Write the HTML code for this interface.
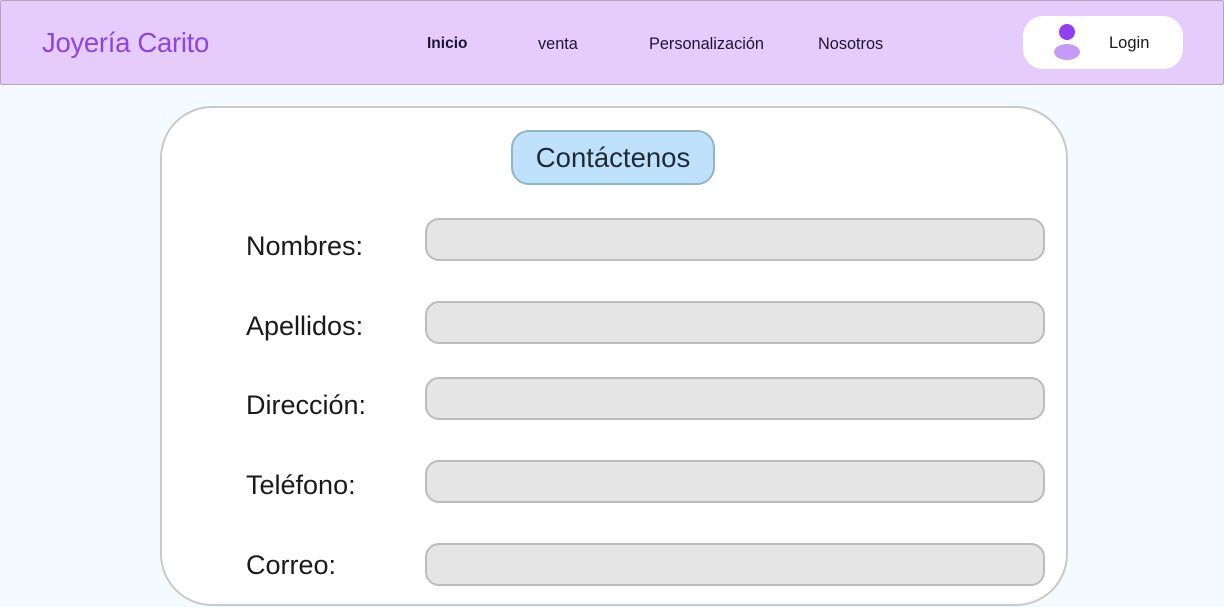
<!DOCTYPE html>
<html><head><meta charset="utf-8"><style>
*{margin:0;padding:0;box-sizing:border-box}
body{width:1224px;height:607px;background:#f5faff;font-family:"Liberation Sans",sans-serif;position:relative;overflow:hidden;color:#1a1a1a}
.hdr{position:absolute;left:0;top:0;width:1224px;height:85px;background:#e5ccfc;border:1px solid #b4a4c4;border-radius:2px}
.logo{position:absolute;left:42px;top:27px;font-size:27.5px;color:#8e44e0;letter-spacing:-0.3px}
.nav{position:absolute;top:35px;font-size:16.3px;color:#1e1430}
.login{position:absolute;left:1023px;top:16px;width:160px;height:53px;background:#fff;border-radius:20px}
.card{position:absolute;left:160px;top:106px;width:908px;height:500px;background:#fff;border:2px solid #c9c9c9;border-radius:52px}
.title{position:absolute;left:511px;top:130px;width:204px;height:55px;background:#bee2fb;border:2px solid #93b4c8;border-radius:18px;font-size:27.5px;text-align:center;line-height:52px;color:#1e2a36}
.lbl{position:absolute;left:246px;font-size:27px;color:#1a1a1a}
.in{position:absolute;left:425px;width:620px;height:43px;background:#e5e5e5;border:2px solid #bcbcbc;border-radius:14px}
</style></head><body>
<div class="hdr"></div>
<div class="logo">Joyería Carito</div>
<div class="nav" style="left:427px;font-weight:bold;font-size:15.5px">Inicio</div>
<div class="nav" style="left:538px">venta</div>
<div class="nav" style="left:649px">Personalización</div>
<div class="nav" style="left:818px">Nosotros</div>
<div class="login">
<svg width="160" height="53" style="position:absolute;left:0;top:0"><circle cx="44" cy="16" r="8" fill="#9140ef"/><ellipse cx="44" cy="36" rx="13" ry="8" fill="#c59bf7"/></svg>
<span style="position:absolute;left:86px;top:18px;font-size:16.5px;color:#1a1a1a">Login</span>
</div>
<div class="card"></div>
<div class="title">Contáctenos</div>
<div class="lbl" style="top:231px">Nombres:</div>
<div class="lbl" style="top:311px">Apellidos:</div>
<div class="lbl" style="top:390px">Dirección:</div>
<div class="lbl" style="top:470px">Teléfono:</div>
<div class="lbl" style="top:550px">Correo:</div>
<div class="in" style="top:218px"></div>
<div class="in" style="top:301px"></div>
<div class="in" style="top:377px"></div>
<div class="in" style="top:460px"></div>
<div class="in" style="top:543px"></div>
</body></html>
